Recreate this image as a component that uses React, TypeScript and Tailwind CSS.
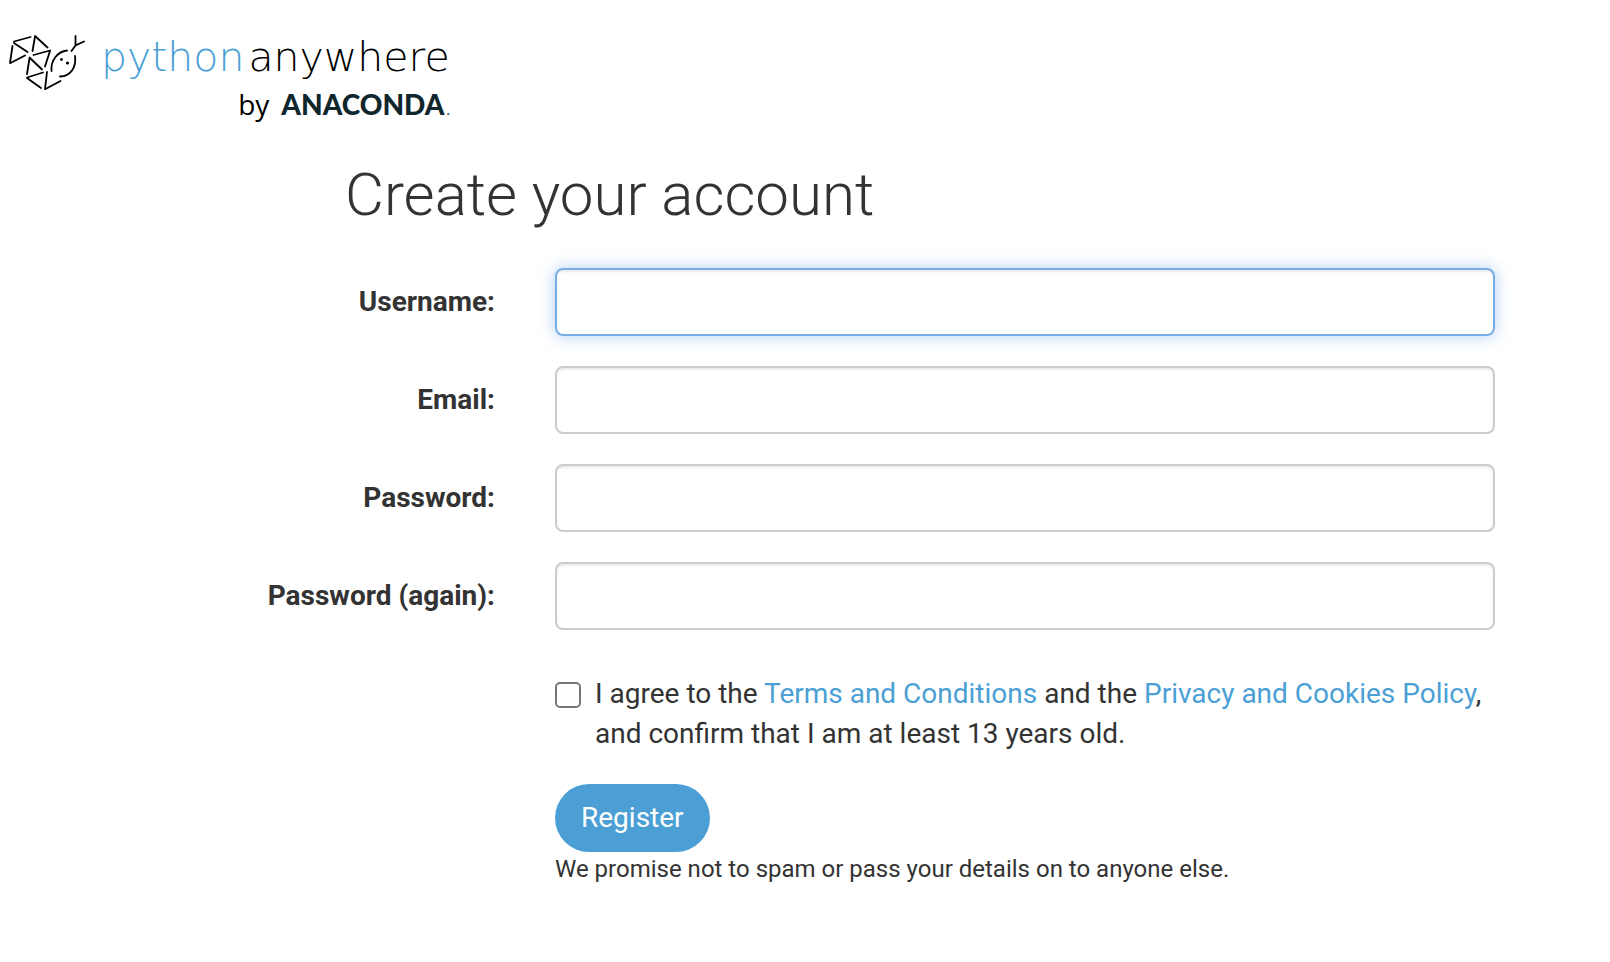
import React from "react";

const fields = [
  { id: "username", label: "Username:", type: "text" },
  { id: "email", label: "Email:", type: "email" },
  { id: "password1", label: "Password:", type: "password" },
  { id: "password2", label: "Password (again):", type: "password" },
];

function SnakeMark() {
  return (
    <svg
      className="h-[56px] w-[76px] shrink-0"
      viewBox="9 35 76 56"
      fill="none"
      stroke="#000"
      strokeWidth="1.8"
      strokeLinecap="round"
      aria-hidden="true"
    >
      <path d="M14 41.500 30.500 37M14 43 27.500 52M12.500 46 10 63M10.500 63 25 55.500" />
      <path d="M35 36 47.500 47.500M35 36.500 32.500 51M33.500 55 50 50.500M50 51 45 66.500" />
      <path d="M29.500 57.500 42 69.500M29.500 58 27 74M27 77.500 43 72.500M27 78 41 88M47 72 45 89M45.500 89 60.500 81" />
      <path d="M67 50.500C58 51.500 50.500 60 51.500 71M75 56C76.500 67 71 76 60 76.500" />
      <path d="M71.500 51 75.500 45.500 84 41.500M75.500 45.500V36" />
      <circle cx="61.500" cy="59.500" r="1.400" fill="#000" stroke="none" />
      <circle cx="67.500" cy="63" r="1.600" fill="#000" stroke="none" />
    </svg>
  );
}

function Logo() {
  return (
    <a href="#" className="inline-flex items-start gap-4 text-black">
      <SnakeMark />
      <span className="flex flex-col items-end">
        <span className="flex gap-1 font-['DejaVu_Sans',sans-serif] text-[41px] leading-[44px] font-extralight">
          <span className="text-[#4b9fd5]">python</span>
          <span>anywhere</span>
        </span>
        <span className="flex items-baseline gap-3 leading-[50px]">
          <span className="font-['Open_Sans',sans-serif] text-[28px] font-normal">by</span>
          <span className="flex items-baseline gap-[2px] font-[Lato,sans-serif] text-[28px] font-black text-[#10262d]">
            <span>ANACONDA</span>
            <span className="text-[14px] text-[#5a686d]">.</span>
          </span>
        </span>
      </span>
    </a>
  );
}

export default function App() {
  return (
    <div className="min-h-screen bg-white font-[Roboto,sans-serif] text-[28px] leading-[40px] text-[#333]">
      <header className="flex px-[9px] pt-[35px]">
        <Logo />
      </header>
      <main className="pr-[85px] pl-[25px]">
        <h1 className="mt-[27px] pl-[320px] text-[60px] leading-[66px] font-light">Create your account</h1>
        <form className="mt-[40px]" onSubmit={(e) => e.preventDefault()}>
          <div className="flex flex-col gap-[30px]">
            {fields.map((f) => (
              <div key={f.id} className="grid grid-cols-3 items-center">
                <label htmlFor={f.id} className="px-[30px] text-right font-bold">
                  {f.label}
                </label>
                <div className="col-span-2 px-[30px]">
                  <input
                    id={f.id}
                    name={f.id}
                    type={f.type}
                    className={
                      f.id === "username"
                        ? "block h-[68px] w-full rounded-[8px] border-2 border-[#76ade6] px-6 shadow-[inset_0_2px_2px_rgba(0,0,0,0.075),0_0_16px_rgba(118,173,230,0.6)] outline-none"
                        : "block h-[68px] w-full rounded-[8px] border-2 border-[#ccc] px-6 shadow-[inset_0_2px_2px_rgba(0,0,0,0.075)] outline-none focus:border-[#76ade6]"
                    }
                  />
                </div>
              </div>
            ))}
          </div>
          <div className="grid grid-cols-3">
            <div className="col-span-2 col-start-2 px-[30px] pt-[44px]">
              <div className="flex items-start gap-[14px]">
                <input
                  id="agree"
                  type="checkbox"
                  className="mt-[8px] size-[26px] shrink-0 appearance-none rounded-[5px] border-2 border-[#767676] bg-white checked:bg-[#4b9fd5]"
                />
                <label htmlFor="agree">
                  I agree to the{" "}
                  <a href="#terms" className="text-[#4b9fd5]">Terms and Conditions</a> and the{" "}
                  <a href="#privacy" className="text-[#4b9fd5]">Privacy and Cookies Policy</a>, and confirm that I am
                  at least 13 years old.
                </label>
              </div>
              <button type="submit" className="mt-[30px] block h-[68px] rounded-full bg-[#4b9fd5] px-[26px] text-white">
                Register
              </button>
              <p className="text-[24px] leading-[34px]">
                We promise not to spam or pass your details on to anyone else.
              </p>
            </div>
          </div>
        </form>
      </main>
    </div>
  );
}
